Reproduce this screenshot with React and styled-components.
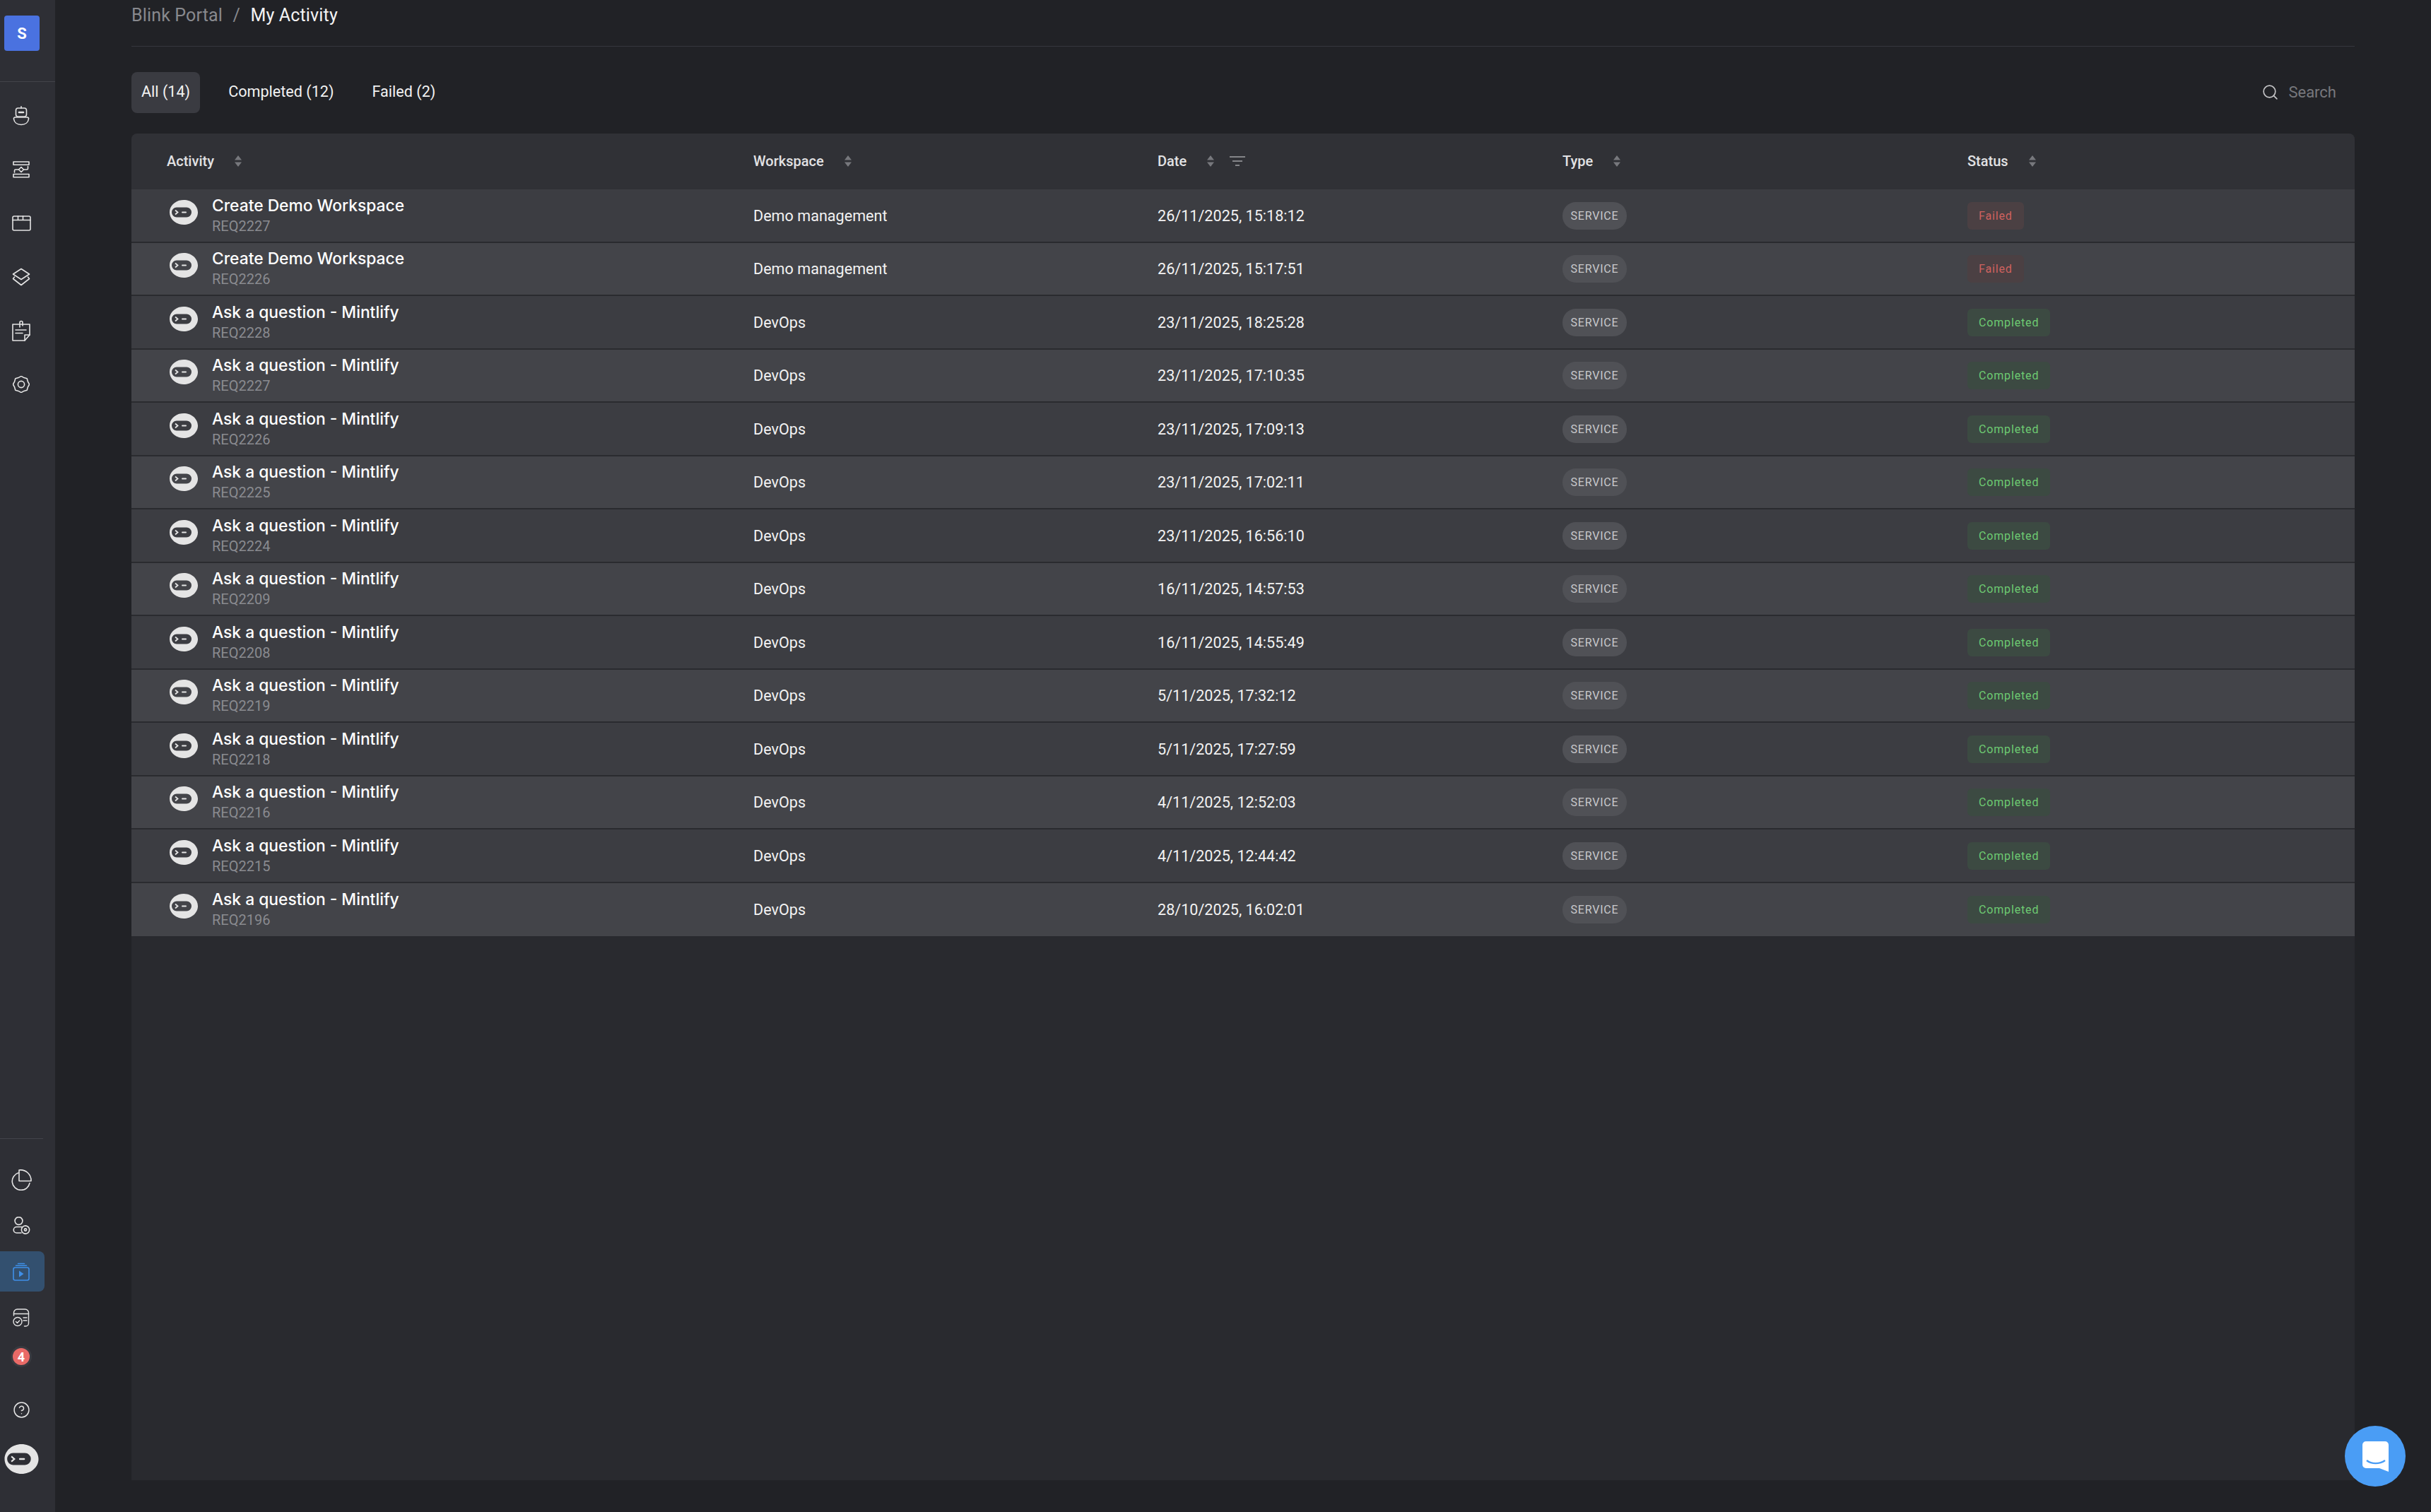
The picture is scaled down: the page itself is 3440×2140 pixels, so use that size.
import React from "react";
import styled, { createGlobalStyle, css } from "styled-components";
import { Search, CircleHelp } from "lucide-react";

const activities = [
  ["Create Demo Workspace", "REQ2227", "Demo management", "26/11/2025, 15:18:12", "Failed"],
  ["Create Demo Workspace", "REQ2226", "Demo management", "26/11/2025, 15:17:51", "Failed"],
  ["Ask a question - Mintlify", "REQ2228", "DevOps", "23/11/2025, 18:25:28", "Completed"],
  ["Ask a question - Mintlify", "REQ2227", "DevOps", "23/11/2025, 17:10:35", "Completed"],
  ["Ask a question - Mintlify", "REQ2226", "DevOps", "23/11/2025, 17:09:13", "Completed"],
  ["Ask a question - Mintlify", "REQ2225", "DevOps", "23/11/2025, 17:02:11", "Completed"],
  ["Ask a question - Mintlify", "REQ2224", "DevOps", "23/11/2025, 16:56:10", "Completed"],
  ["Ask a question - Mintlify", "REQ2209", "DevOps", "16/11/2025, 14:57:53", "Completed"],
  ["Ask a question - Mintlify", "REQ2208", "DevOps", "16/11/2025, 14:55:49", "Completed"],
  ["Ask a question - Mintlify", "REQ2219", "DevOps", "5/11/2025, 17:32:12", "Completed"],
  ["Ask a question - Mintlify", "REQ2218", "DevOps", "5/11/2025, 17:27:59", "Completed"],
  ["Ask a question - Mintlify", "REQ2216", "DevOps", "4/11/2025, 12:52:03", "Completed"],
  ["Ask a question - Mintlify", "REQ2215", "DevOps", "4/11/2025, 12:44:42", "Completed"],
  ["Ask a question - Mintlify", "REQ2196", "DevOps", "28/10/2025, 16:02:01", "Completed"],
];

const GlobalStyle = createGlobalStyle`
  html, body {
    margin: 0;
    height: 100%;
    background: #212226;
    overflow: hidden;
    font-family: Roboto, "Liberation Sans", sans-serif;
  }
  #root {
    height: 100%;
  }
`;

const Page = styled.div`
  display: flex;
  height: 2140px;
  background: #212226;
`;

const Sidebar = styled.aside`
  width: 78px;
  flex-shrink: 0;
  display: flex;
  flex-direction: column;
  background: #2e2f35;
  color: #e4e4e4;
`;

const SidebarTop = styled.div`
  height: 116px;
  padding: 22px 0 0 6px;
  box-sizing: border-box;
  border-bottom: 1px solid #42434a;
`;

const Avatar = styled.div`
  width: 50px;
  height: 50px;
  border-radius: 4px;
  background: #4a72e0;
  color: #fff;
  font-size: 22px;
  font-weight: 700;
  display: flex;
  align-items: center;
  justify-content: center;
`;

const TopNav = styled.nav`
  display: flex;
  flex-direction: column;
  padding-top: 10px;
`;

const BottomNav = styled.nav`
  margin-top: auto;
  display: flex;
  flex-direction: column;
  padding-bottom: 51px;

  &::before {
    content: "";
    width: 61px;
    height: 1px;
    background: #42434a;
    margin-bottom: 29px;
  }
`;

const NavItem = styled.div`
  position: relative;
  width: 63px;
  height: ${(p) => p.$h || 57}px;
  margin-top: ${(p) => p.$gap || 0}px;
  padding-right: 3px;
  box-sizing: border-box;
  display: flex;
  align-items: center;
  justify-content: center;
  flex-shrink: 0;
  border-radius: ${(p) => (p.$active ? "0 8px 8px 0" : "0")};
  background: ${(p) => (p.$active ? "#33506f" : "transparent")};
  color: ${(p) => (p.$active ? "#3f8fe8" : "inherit")};
`;

const NotifyBadge = styled.span`
  position: absolute;
  left: 18px;
  top: 12px;
  width: 24px;
  height: 24px;
  border-radius: 50%;
  background: #e96a67;
  box-shadow: 0 0 0 3px #393a40;
  color: #fff;
  font-size: 18px;
  font-weight: 700;
  display: flex;
  align-items: center;
  justify-content: center;
`;

const Main = styled.main`
  flex: 1;
  min-width: 0;
  display: flex;
  flex-direction: column;
  padding: 0 108px 45px;
`;

const Breadcrumb = styled.div`
  display: flex;
  gap: 14.5px;
  font-size: 25px;
  letter-spacing: 0.15px;
  line-height: 44px;
  padding-bottom: 21px;
  border-bottom: 1px solid #36373d;
  color: #88898e;

  strong {
    font-weight: 400;
    color: #f4f4f4;
  }
`;

const Toolbar = styled.div`
  display: flex;
  align-items: center;
  justify-content: space-between;
  height: 58px;
  margin: 36px 0 29px;
  padding-right: 26px;
`;

const Tabs = styled.div`
  display: flex;
  gap: 26px;
`;

const Tab = styled.button`
  height: 58px;
  padding: 0 14px 4px;
  border: 0;
  border-radius: 8px;
  background: ${(p) => (p.$active ? "#3a3b41" : "transparent")};
  color: #f2f2f2;
  font-family: inherit;
  font-size: 21.6px;
`;

const SearchBox = styled.div`
  display: flex;
  align-items: center;
  gap: 13px;
  font-size: 22px;
  color: #77787d;
  padding-bottom: 2px;

  svg {
    color: #c4c4c6;
  }
`;

const Table = styled.section`
  flex: 1;
  background: #292a2f;
  border-radius: 8px 8px 0 0;
  overflow: hidden;
`;

const columns = css`
  display: grid;
  grid-template-columns: 830px 572px 573px 573px 1fr;
  padding-left: 50px;
  align-items: center;
`;

const HeadRow = styled.div`
  ${columns}
  height: 79px;
  padding-bottom: 2px;
  box-sizing: border-box;
  background: #303136;
`;

const HeadCell = styled.div`
  display: flex;
  align-items: center;
  font-size: 20px;
  font-weight: 500;
  color: #e2e2e4;

  svg {
    margin-left: 29px;
  }
`;

const FilterGlyph = styled.svg`
  && {
    margin-left: 22px;
  }
`;

const Row = styled.div`
  ${columns}
  height: 75.5px;
  box-sizing: border-box;
  background: ${(p) => (p.$even ? "#434449" : "#3c3d42")};
  border-bottom: 2px solid #2a2b2f;
  color: #f2f2f2;
  font-size: 21.6px;

  &:last-child {
    border-bottom: 0;
  }
`;

const ActivityCell = styled.div`
  display: flex;
  align-items: flex-start;
  gap: 20px;
  margin-left: 4px;
`;

const TextCell = styled.div`
  margin-top: 1px;
`;

const Logo = styled.svg`
  flex-shrink: 0;
  margin-top: ${(p) => p.$top || 0}px;
  display: block;
`;

const ActivityText = styled.div`
  display: flex;
  flex-direction: column;
`;

const Title = styled.span`
  font-family: Inter, "Open Sans", sans-serif;
  font-size: 22.8px;
  font-weight: 500;
  line-height: 30px;
  color: #fff;
`;

const Reference = styled.span`
  font-size: 20px;
  line-height: 28px;
  color: #8a8b90;
`;

const TypePill = styled.span`
  justify-self: start;
  height: 39px;
  width: 91px;
  margin-top: 1px;
  border-radius: 19px;
  background: #505156;
  color: #c9c9cc;
  font-size: 16px;
  letter-spacing: 0.8px;
  display: flex;
  align-items: center;
  justify-content: center;
`;

const StatusPill = styled.span`
  justify-self: start;
  height: 39px;
  margin-top: 1px;
  padding: 0 16px;
  border-radius: 6px;
  font-size: 16px;
  letter-spacing: 0.85px;
  display: flex;
  align-items: center;
  background: ${(p) => (p.$failed ? "#4b4043" : "#3c4a42")};
  color: ${(p) => (p.$failed ? "#d0625f" : "#6ecb72")};
`;

const ChatButton = styled.button`
  position: fixed;
  left: 3318px;
  top: 2018px;
  width: 86px;
  height: 86px;
  border: 0;
  padding: 0;
  border-radius: 50%;
  background: #4a9df5;
  display: flex;
  align-items: center;
  justify-content: center;
`;

const LOGO_PATH =
  "M20 0C31 0 40 7.800 40 17.500S31 35 20 35 0 27.200 0 17.500 9 0 20 0ZM10 10.500a7 7 0 0 0 0 14H24a7 7 0 0 0 0-14Z";

const BotLogo = ({ width = 40, height = 35, top = 0 }) => (
  <Logo width={width} height={height} viewBox="0 0 40 35" $top={top}>
    <path d={LOGO_PATH} fill="#e4e4e4" fillRule="evenodd" />
    <path d="M8 14.500l3.500 3-3.500 3" fill="none" stroke="#e4e4e4" strokeWidth="1.8" />
    <rect x="17" y="16.5" width="7" height="2" rx="1" fill="#e4e4e4" />
  </Logo>
);

const SortIcon = () => (
  <svg width="10" height="16" viewBox="0 0 10 16" fill="#77787d">
    <path d="M5 0l5 6.500H0zM5 16L0 9.500h10z" />
  </svg>
);

const FilterIcon = () => (
  <FilterGlyph width="22" height="16" viewBox="0 0 22 16" fill="none" stroke="#a0a1a5" strokeWidth="1.6">
    <path d="M0 2h22M4 8h14M8 14h6" />
  </FilterGlyph>
);

const Line = ({ w, h, vb, sw = 1.6, children }) => (
  <svg width={w} height={h} viewBox={vb} fill="none" stroke="currentColor" strokeWidth={sw} strokeLinejoin="round" strokeLinecap="round">
    {children}
  </svg>
);

// scalloped outline for the settings gear
const gearPoints = Array.from({ length: 16 }, (_, i) => {
  const r = i % 2 ? 10.2 : 11.6;
  const a = (i * Math.PI) / 8;
  return `${12 + r * Math.cos(a)},${12 + r * Math.sin(a)}`;
}).join(" ");

const RobotIcon = () => (
  <Line w={24} h={28} vb="0 0 24 28">
    <rect x="4.5" y="3" width="15" height="12" rx="3" />
    <path d="M12 .8V3" />
    <path d="M9 9h6" strokeWidth="2.6" />
    <path d="M3.500 16h17c1.500 0 2.300 1 2 2.500C21.800 23 18 26.500 12 26.500S2.200 23 1.500 18.500c-.3-1.500.5-2.500 2-2.500z" />
  </Line>
);

const FlowIcon = () => (
  <Line w={24} h={24} vb="0 0 24 24">
    <rect x="1" y="1" width="22" height="4.2" />
    <rect x="1" y="18.5" width="22" height="4.2" />
    <path d="M12 8.500l3.500 3.500-3.500 3.500L8.500 12z" />
    <path d="M2.500 16v-2.500a1.500 1.500 0 0 1 1.500-1.500h4.500M15.500 12H20a1.500 1.500 0 0 0 1.500-1.500V7.500" />
  </Line>
);

const WindowIcon = () => (
  <Line w={27} h={22} vb="0 0 27 22">
    <rect x="1" y="1" width="25" height="20" rx="2" />
    <path d="M1 6.500h25M8.500 1v5.500M15.500 1v5.500" />
  </Line>
);

const LayersIcon = () => (
  <Line w={26} h={26} vb="0 0 26 26">
    <path d="M13 1.500l11.500 7.500L13 16.500 1.500 9z" />
    <path d="M3.500 13L1.500 15.500 13 24.500l11.500-9-2-2.500" />
  </Line>
);

const NoteIcon = () => (
  <Line w={26} h={30} vb="0 0 26 30">
    <path d="M1 6h24v15l-7 8H1z" />
    <path d="M25 21h-7v8" />
    <path d="M5 14h15M5 18.500h10" />
    <path d="M11 10V3.500a2 2 0 0 1 4 0V8" />
  </Line>
);

const GearIcon = () => (
  <Line w={24} h={24} vb="0 0 24 24">
    <polygon points={gearPoints} />
    <circle cx="12" cy="12" r="4.6" />
  </Line>
);

const PieIcon = () => (
  <Line w={30} h={30} vb="0 0 30 30">
    <path d="M11 5A12.500 12.500 0 1 0 27 19.500" />
    <path d="M12 1v15.500h17A15 15 0 0 0 12 1z" />
  </Line>
);

const UserGearIcon = () => (
  <Line w={26} h={26} vb="0 0 26 26">
    <circle cx="9.5" cy="6" r="5.4" />
    <path d="M14 14.500H6.500a4.200 4.200 0 0 0 0 8.500H13" />
    <circle cx="19" cy="18.5" r="5.6" strokeDasharray="3 .6" />
    <circle cx="19" cy="18.5" r="1.6" />
  </Line>
);

const PlayStackIcon = () => (
  <Line w={24} h={26} vb="0 0 24 26">
    <rect x="1" y="7" width="22" height="18" rx="2.5" />
    <path d="M4.500 4.300h15M7.500 1.500h9" />
    <path d="M9 11.500l6.500 4.500L9 20.500z" fill="currentColor" stroke="none" />
  </Line>
);

const ApprovalIcon = () => (
  <Line w={24} h={26} vb="0 0 24 26" sw={1.4}>
    <path d="M1.500 10V6a5 5 0 0 1 5-5h11a5 5 0 0 1 5 5v15a4 4 0 0 1-4 4h-2" />
    <path d="M1.500 7.500h21M15 13h5M15 17h5" />
    <circle cx="7" cy="18.5" r="6" />
    <path d="M4.500 18.500l2 2 3.200-3.500" />
  </Line>
);

const BellDots = () => (
  <Line w={26} h={26} vb="0 0 26 26" sw={1.4}>
    <path d="M3 20c3 2 13 3 21-5" strokeDasharray="2 2.2" />
  </Line>
);

const App = () => (
  <Page>
    <GlobalStyle />
    <Sidebar>
      <SidebarTop>
        <Avatar>S</Avatar>
      </SidebarTop>
      <TopNav>
        {[RobotIcon, FlowIcon, WindowIcon, LayersIcon, NoteIcon, GearIcon].map((Icon, index) => (
          <NavItem key={index} $h={76}>
            <Icon />
          </NavItem>
        ))}
      </TopNav>
      <BottomNav>
        <NavItem>
          <PieIcon />
        </NavItem>
        <NavItem $gap={8}>
          <UserGearIcon />
        </NavItem>
        <NavItem $gap={8} $active>
          <PlayStackIcon />
        </NavItem>
        <NavItem $gap={8}>
          <ApprovalIcon />
        </NavItem>
        <NavItem $h={48} $gap={3}>
          <BellDots />
          <NotifyBadge>4</NotifyBadge>
        </NavItem>
        <NavItem $h={48} $gap={27}>
          <CircleHelp size={25} strokeWidth={1.4} />
        </NavItem>
        <NavItem $h={48} $gap={22}>
          <BotLogo width={49} height={42} />
        </NavItem>
      </BottomNav>
    </Sidebar>
    <Main>
      <Breadcrumb>
        <span>Blink Portal</span>
        <span>/</span>
        <strong>My Activity</strong>
      </Breadcrumb>
      <Toolbar>
        <Tabs>
          <Tab $active>All (14)</Tab>
          <Tab>Completed (12)</Tab>
          <Tab>Failed (2)</Tab>
        </Tabs>
        <SearchBox>
          <Search size={25} strokeWidth={1.6} />
          Search
        </SearchBox>
      </Toolbar>
      <Table>
        <HeadRow>
          <HeadCell>
            Activity
            <SortIcon />
          </HeadCell>
          <HeadCell>
            Workspace
            <SortIcon />
          </HeadCell>
          <HeadCell>
            Date
            <SortIcon />
            <FilterIcon />
          </HeadCell>
          <HeadCell>
            Type
            <SortIcon />
          </HeadCell>
          <HeadCell>
            Status
            <SortIcon />
          </HeadCell>
        </HeadRow>
        {activities.map(([title, reference, workspace, date, status], index) => (
          <Row key={index} $even={index % 2 === 1}>
            <ActivityCell>
              <BotLogo top={7} />
              <ActivityText>
                <Title>{title}</Title>
                <Reference>{reference}</Reference>
              </ActivityText>
            </ActivityCell>
            <TextCell>{workspace}</TextCell>
            <TextCell>{date}</TextCell>
            <TypePill>SERVICE</TypePill>
            <StatusPill $failed={status === "Failed"}>{status}</StatusPill>
          </Row>
        ))}
      </Table>
    </Main>
    <ChatButton>
      <svg width="37" height="43" viewBox="0 0 37 43">
        <path d="M5 0h27a5 5 0 0 1 5 5v38l-13-5H5a5 5 0 0 1-5-5V5a5 5 0 0 1 5-5z" fill="#fff" />
        <path d="M6 27c7 5.500 18 5.500 26 0" fill="none" stroke="#4a9df5" strokeWidth="2.4" />
      </svg>
    </ChatButton>
  </Page>
);

export default App;
